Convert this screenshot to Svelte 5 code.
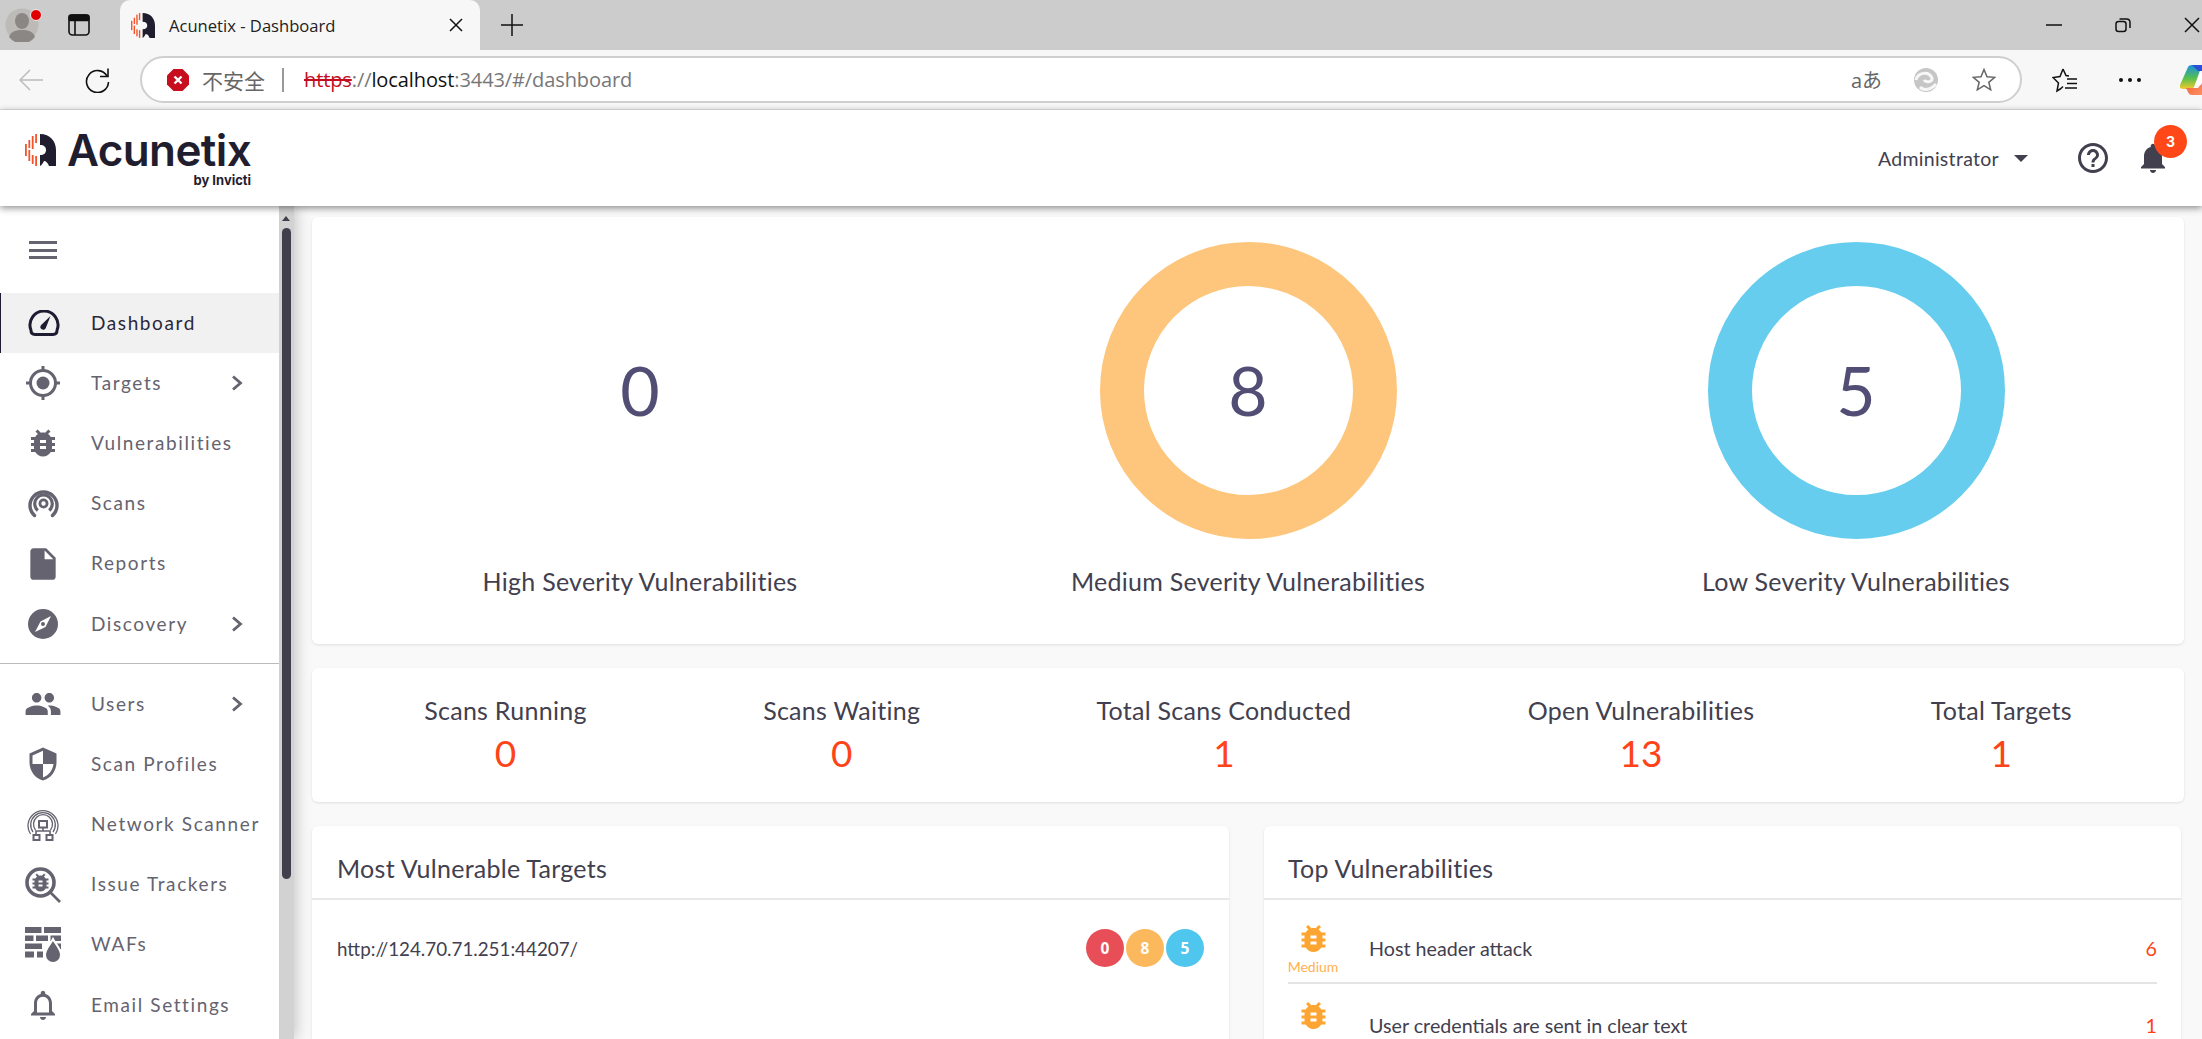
<script>
  const PATHS = {
    bug: 'M20 8h-2.81c-.45-.78-1.07-1.45-1.82-1.96L17 4.41 15.59 3l-2.17 2.17C12.96 5.06 12.49 5 12 5c-.49 0-.96.06-1.41.17L8.41 3 7 4.41l1.62 1.63C7.88 6.55 7.26 7.22 6.81 8H4v2h2.09c-.05.33-.09.66-.09 1v1H4v2h2v1c0 .34.04.67.09 1H4v2h2.81c1.04 1.79 2.97 3 5.19 3s4.15-1.21 5.19-3H20v-2h-2.09c.05-.33.09-.66.09-1v-1h2v-2h-2v-1c0-.34-.04-.67-.09-1H20V8zm-6 8h-4v-2h4v2zm0-4h-4v-2h4v2z',
    file: 'M6 2c-1.1 0-1.99.9-1.99 2L4 20c0 1.1.89 2 1.99 2H18c1.1 0 2-.9 2-2V8l-6-6H6zm7 7V3.5L18.5 9H13z',
    users: 'M16 11c1.66 0 2.99-1.34 2.99-3S17.66 5 16 5c-1.66 0-3 1.34-3 3s1.34 3 3 3zm-8 0c1.66 0 2.99-1.34 2.99-3S9.66 5 8 5C6.34 5 5 6.34 5 8s1.34 3 3 3zm0 2c-2.33 0-7 1.17-7 3.5V19h14v-2.5c0-2.33-4.67-3.5-7-3.5zm8 0c-.29 0-.62.02-.97.05 1.16.84 1.97 1.97 1.97 3.45V19h6v-2.5c0-2.33-4.67-3.5-7-3.5z',
    shield: 'M12 1L3 5v6c0 5.55 3.84 10.74 9 12 5.16-1.26 9-6.45 9-12V5l-9-4zm0 10.99h7c-.53 4.12-3.28 7.79-7 8.94V12H5V6.3l7-3.11v8.8z',
    bellO: 'M12 22c1.1 0 2-.9 2-2h-4c0 1.1.9 2 2 2zm6-6v-5c0-3.07-1.63-5.64-4.5-6.32V4c0-.83-.67-1.5-1.5-1.5s-1.5.67-1.5 1.5v.68C7.64 5.36 6 7.92 6 11v5l-2 2v1h16v-1l-2-2zm-2 1H8v-6c0-2.48 1.51-4.5 4-4.5s4 2.02 4 4.5v6z',
    bell: 'M12 22c1.1 0 2-.9 2-2h-4c0 1.1.89 2 2 2zm6-6v-5c0-3.07-1.64-5.64-4.5-6.32V4c0-.83-.67-1.5-1.5-1.5s-1.5.67-1.5 1.5v.68C7.63 5.36 6 7.92 6 11v5l-2 2v1h16v-1l-2-2z',
    help: 'M11 18h2v-2h-2v2zm1-16C6.48 2 2 6.48 2 12s4.48 10 10 10 10-4.48 10-10S17.52 2 12 2zm0 18c-4.41 0-8-3.59-8-8s3.59-8 8-8 8 3.59 8 8-3.59 8-8 8zm0-14c-2.21 0-4 1.79-4 4h2c0-1.1.9-2 2-2s2 .9 2 2c0 2-3 1.75-3 5h2c0-2.25 3-2.5 3-5 0-2.21-1.79-4-4-4z'
  };
  const primary = [
    { label: 'Dashboard', icon: 'gauge', active: true },
    { label: 'Targets', icon: 'target', more: true },
    { label: 'Vulnerabilities', icon: 'bug' },
    { label: 'Scans', icon: 'scans' },
    { label: 'Reports', icon: 'file' },
    { label: 'Discovery', icon: 'compass', more: true }
  ];
  const secondary = [
    { label: 'Users', icon: 'users', more: true },
    { label: 'Scan Profiles', icon: 'shield' },
    { label: 'Network Scanner', icon: 'network' },
    { label: 'Issue Trackers', icon: 'tracker' },
    { label: 'WAFs', icon: 'waf' },
    { label: 'Email Settings', icon: 'bellO' }
  ];
  const severities = [
    { cls: 'high', value: 0, label: 'High Severity Vulnerabilities' },
    { cls: 'medium', value: 8, label: 'Medium Severity Vulnerabilities' },
    { cls: 'low', value: 5, label: 'Low Severity Vulnerabilities' }
  ];
  const stats = [
    { label: 'Scans Running', value: 0 },
    { label: 'Scans Waiting', value: 0 },
    { label: 'Total Scans Conducted', value: 1 },
    { label: 'Open Vulnerabilities', value: 13 },
    { label: 'Total Targets', value: 1 }
  ];
  const tops = [
    { name: 'Host header attack', count: 6 },
    { name: 'User credentials are sent in clear text', count: 1 }
  ];
</script>

{#snippet logoMark(cls)}
  <svg class={cls} viewBox="0 0 31 32">
    <path fill="#1f1d2e" d="M15 0C25 0 31 7 31 16V32H24C23 29 21 27 19 27C18 29 16 32 15 32V21C19 21 21 19 21 16C21 13 19 11 15 11Z" />
    <g fill="#f2552c">
      <rect x="0" y="10" width="1.8" height="12" />
      <rect x="3.4" y="6" width="1.8" height="8" /><rect x="3.4" y="16" width="1.8" height="11" />
      <rect x="6.8" y="2" width="1.8" height="13" /><rect x="6.8" y="21" width="1.8" height="9" />
      <rect x="10.2" y="0" width="1.8" height="9" /><rect x="10.2" y="22" width="1.8" height="10" />
    </g>
  </svg>
{/snippet}

{#snippet navIcon(name)}
  {#if name === 'gauge'}
    <svg class="ic gauge" viewBox="0 0 32 26" fill="none" stroke="currentColor">
      <path stroke-width="3" d="M7 24.500H25Q29 24.500 29.080 20A14 14 0 1 0 2.920 20Q3 24.500 7 24.500Z" />
      <path stroke-width="0" fill="currentColor" d="M22.500 6L17.800 18A2.800 2.800 0 1 1 13.200 15Z" />
    </svg>
  {:else if name === 'target'}
    <svg class="ic target" viewBox="0 0 34 34" fill="none" stroke="currentColor">
      <circle cx="17" cy="17" r="12.500" stroke-width="3" />
      <circle cx="17" cy="17" r="6.500" fill="currentColor" stroke="none" />
      <path stroke-width="3" d="M17 0v4M17 30v4M0 17h4M30 17h4" />
    </svg>
  {:else if name === 'scans'}
    <svg class="ic scans" viewBox="0 0 31 29" fill="none" stroke="currentColor">
      <circle cx="15.500" cy="14.500" r="3.600" stroke-width="2.800" />
      <path stroke-width="3.200" d="M9.800 21.500A8.800 8.800 0 1 1 21.200 21.500" />
      <path stroke-width="3.400" stroke-linecap="round" d="M6.500 26.500A13.500 13.500 0 1 1 24.500 26.500" />
    </svg>
  {:else if name === 'compass'}
    <svg class="ic compass" viewBox="0 0 30 30">
      <circle cx="15" cy="15" r="15" fill="currentColor" />
      <path fill="#fff" d="M23 7L17.500 18 7 23 12.500 12.500z" />
      <circle cx="15" cy="15" r="2" fill="currentColor" />
    </svg>
  {:else if name === 'network'}
    <svg class="ic network" viewBox="0 0 32 33" fill="none" stroke="currentColor" stroke-width="1.300">
      <path d="M3.500 26A15 15 0 1 1 28.500 26" />
      <path d="M6 24A12.300 12.300 0 1 1 26 24" />
      <path d="M8.500 22A9.500 9.500 0 1 1 23.500 22" />
      <rect x="12" y="13" width="8" height="6.500" stroke-width="2" fill="#fff" />
      <path stroke-width="1.600" d="M16 19.500v3.500M9 27v-4h14v4" />
      <rect x="6.500" y="27" width="6" height="5" stroke-width="2" />
      <rect x="19.500" y="27" width="6" height="5" stroke-width="2" />
    </svg>
  {:else if name === 'tracker'}
    <svg class="ic tracker" viewBox="0 0 36 36" fill="none" stroke="currentColor">
      <circle cx="15.500" cy="15.500" r="13.500" stroke-width="3.600" />
      <path stroke-width="2.600" d="M25 25L35 35" />
      <svg x="3.500" y="3.500" width="24" height="24" viewBox="0 0 24 24"><path fill="currentColor" stroke="none" d={PATHS.bug} /></svg>
    </svg>
  {:else if name === 'waf'}
    <svg class="ic waf" viewBox="0 0 36 36">
      <g fill="currentColor">
        <rect x="0" y="0" width="16.500" height="6" /><rect x="19" y="0" width="17" height="6" />
        <rect x="0" y="8.500" width="8.500" height="5.500" /><rect x="11" y="8.500" width="12" height="5.500" /><rect x="25.500" y="8.500" width="10.500" height="5.500" />
        <rect x="0" y="16.500" width="17" height="5.500" /><rect x="30" y="16.500" width="6" height="5.500" />
        <rect x="0" y="24.500" width="9" height="6" /><rect x="12" y="24.500" width="6" height="6" />
        <path stroke="#fff" stroke-width="2" d="M28 12C31 18 36 22 36 28A8 8 0 0 1 20 28C20 22 25 18 28 12Z" />
      </g>
    </svg>
  {:else}
    <svg class="ic {name}" viewBox="0 0 24 24"><path fill="currentColor" d={PATHS[name]} /></svg>
  {/if}
{/snippet}

{#snippet navRow(item)}
  <div class="nav-row" class:active={item.active}>
    <span class="nav-icon">{@render navIcon(item.icon)}</span>
    <span class="nav-label">{item.label}</span>
    {#if item.more}
      <svg class="chev" viewBox="0 0 12 16" fill="none" stroke="currentColor" stroke-width="2.800"><path d="M2 1.500L9.500 8 2 14.500" /></svg>
    {/if}
  </div>
{/snippet}

<div class="page">
  <div class="tabstrip">
    <div class="profile">
      <svg viewBox="0 0 34 34">
        <circle cx="17" cy="17" r="16.500" fill="#bdbbb8" />
        <ellipse cx="17" cy="13" rx="7" ry="8" fill="#8a8784" />
        <path fill="#8a8784" d="M4 29C6 23 11 22 17 22S28 23 30 29A16.500 16.500 0 0 1 4 29Z" />
      </svg>
      <span class="dot"></span>
    </div>
    <svg class="tab-layout" viewBox="0 0 22 22" fill="none" stroke="#111" stroke-width="1.600">
      <rect x="1" y="1" width="20" height="20" rx="3.500" />
      <path d="M7 6.500V21M1 6.500H21" />
      <rect x="1" y="1" width="20" height="5" rx="2" fill="#111" />
    </svg>
    <div class="tab">
      {@render logoMark('favicon')}
      <span class="tab-title">Acunetix - Dashboard</span>
      <svg class="tab-close" viewBox="0 0 14 14" stroke="#111" stroke-width="1.500"><path d="M1 1L13 13M13 1L1 13" /></svg>
    </div>
    <svg class="plus" viewBox="0 0 22 22" stroke="#111" stroke-width="1.500"><path d="M11 0V22M0 11H22" /></svg>
    <div class="winctl">
      <svg class="wc" viewBox="0 0 16 16" stroke="#111" stroke-width="1.500"><path d="M0 8H16" /></svg>
      <svg class="wc" viewBox="0 0 16 16" fill="none" stroke="#111" stroke-width="1.500"><rect x="1" y="4.500" width="10" height="10" rx="2.500" /><path d="M4.500 2H11.500Q15 2 15 5.500V11" /></svg>
      <svg class="wc last" viewBox="0 0 16 16" stroke="#111" stroke-width="1.500"><path d="M1 1L15 15M15 1L1 15" /></svg>
    </div>
  </div>

  <div class="toolbar">
    <svg class="back" viewBox="0 0 24 22" fill="none" stroke="#bcbcbc" stroke-width="1.500"><path d="M24 11H1M11 1L1 11 11 21" /></svg>
    <svg class="reload" viewBox="0 0 25 26" fill="none" stroke="#111" stroke-width="1.600"><path d="M22 9A11 11 0 1 0 23.500 15" /><path d="M23 1.500V9.500H15" /></svg>
    <div class="address">
      <svg class="stop" viewBox="0 0 22 22"><path fill="#c70d1e" d="M6.500 0h9L22 6.500v9L15.500 22h-9L0 15.500v-9z" /><path stroke="#fff" stroke-width="2.400" d="M7.500 7.500L14.500 14.500M14.500 7.500L7.500 14.500" /></svg>
      <span class="insecure">不安全</span>
      <span class="sep"></span>
      <span class="url"><span class="scheme">https</span><span class="grey">://</span><span class="host">localhost</span><span class="grey">:3443/#/dashboard</span></span>
      <span class="read">aあ</span>
      <svg class="edge" viewBox="0 0 24 24" fill="none"><circle cx="12" cy="12" r="12" fill="#c6c6c6" /><path stroke="#f7f7f7" stroke-width="3" d="M2 12C4 4 15 3 18 10C19 14 12 15 10 12M6 19C9 23 17 22 22 16" /></svg>
      <svg class="star" viewBox="0 0 24 23" fill="none" stroke="#666" stroke-width="1.500"><path d="M12 1.500L15 8.800 22.800 9.300 16.800 14.300 18.700 21.800 12 17.700 5.300 21.800 7.200 14.300 1.200 9.300 9 8.800Z" /></svg>
    </div>
    <svg class="fav" viewBox="0 0 26 26" fill="none" stroke="#111" stroke-width="1.500"><path d="M11 2L14 8.500 17 9M9 21.500L5 24 6.500 16 1 10.500 8 9.500 11 2M11 19.500L9 21.500" /><path d="M15 12H25M15 16.500H25M13 21H25" /></svg>
    <div class="dots"><span></span><span></span><span></span></div>
    <svg class="copilot" viewBox="0 0 32 30">
      <defs>
        <linearGradient id="cpa" x1="0" y1="0" x2="0" y2="1"><stop offset="0" stop-color="#1b8fe0" /><stop offset=".55" stop-color="#57c04e" /><stop offset="1" stop-color="#f5c92a" /></linearGradient>
        <linearGradient id="cpb" x1="0" y1="0" x2="1" y2="1"><stop offset="0" stop-color="#f0552f" /><stop offset="1" stop-color="#ff9d6e" /></linearGradient>
      </defs>
      <path fill="url(#cpa)" d="M8 2Q9 0 12 0H22L14 22Q13 24 10 24H3Q-1 24 0 20Z" />
      <path fill="#2a4fd8" d="M12 0H28L26 6H18Z" />
      <path fill="url(#cpb)" d="M6 23H18L30 8 32 22Q30 30 24 30H12Q9 30 8 27Z" />
      <path fill="#c14ec0" d="M24 9H31L30 22 24 26Z" />
      <path fill="#fff" d="M20 8H25L21 20H16Z" />
    </svg>
  </div>

  <header class="apphead">
    <div class="brand">
      {@render logoMark('brandmark')}
      <div class="brandtext">
        <span class="brandname">Acunetix</span>
        <span class="brandby">by Invicti</span>
      </div>
    </div>
    <div class="userbox">
      <span class="admin">Administrator</span>
      <span class="caret"></span>
      <svg class="helpic" viewBox="2 2 20 20"><path fill="#42404e" d={PATHS.help} /></svg>
      <div class="bellbox">
        <svg class="bellic" viewBox="4 2 16 20"><path fill="#42404e" d={PATHS.bell} /></svg>
        <span class="count">3</span>
      </div>
    </div>
  </header>

  <div class="body">
    <aside class="sidebar">
      <div class="menu">
        <div class="burger"><span></span><span></span><span></span></div>
        {#each primary as item}{@render navRow(item)}{/each}
        <hr class="navsep" />
        {#each secondary as item}{@render navRow(item)}{/each}
      </div>
      <div class="scroll">
        <span class="scroll-up"></span>
        <span class="scroll-thumb"></span>
      </div>
    </aside>

    <main class="main">
      <section class="card donuts">
        {#each severities as s}
          <div class="sev {s.cls}">
            <div class="ring"><span>{s.value}</span></div>
            <div class="sev-label">{s.label}</div>
          </div>
        {/each}
      </section>

      <section class="card stats">
        {#each stats as st}
          <div class="stat">
            <div class="stat-label">{st.label}</div>
            <div class="stat-value">{st.value}</div>
          </div>
        {/each}
      </section>

      <div class="split">
        <section class="card panel">
          <h2 class="panel-title left">Most Vulnerable Targets</h2>
          <div class="target-row">
            <span class="target-url">http://124.70.71.251:44207/</span>
            <span class="pills">
              <span class="pill red">0</span>
              <span class="pill orange">8</span>
              <span class="pill blue">5</span>
            </span>
          </div>
        </section>
        <section class="card panel">
          <h2 class="panel-title">Top Vulnerabilities</h2>
          <div class="top-list">
            {#each tops as t}
              <div class="top-row">
                <div class="top-sev">
                  <svg class="top-bug" viewBox="4 3 16 18"><path fill="#fda532" d={PATHS.bug} /></svg>
                  <span>Medium</span>
                </div>
                <span class="top-name">{t.name}</span>
                <span class="top-count">{t.count}</span>
              </div>
            {/each}
          </div>
        </section>
      </div>
    </main>
  </div>
</div>

<style>
  :global(body) { margin: 0; background: #f9f9f9; overflow: hidden; }
  .page { width: 2202px; height: 1039px; overflow: hidden; display: flex; flex-direction: column; font-family: Lato, "Noto Sans", sans-serif; color: #42404e; }

  .tabstrip { height: 50px; flex: none; background: #cccccc; display: flex; align-items: center; font-family: "Open Sans", sans-serif; }
  .profile { width: 34px; height: 34px; margin-left: 5px; position: relative; }
  .profile svg { width: 34px; height: 34px; display: block; }
  .dot { position: absolute; top: 1px; right: -3px; width: 10px; height: 10px; border-radius: 50%; background: #e00000; border: 1px solid #eee; }
  .tab-layout { width: 22px; height: 22px; margin-left: 29px; }
  .tab { width: 360px; height: 50px; margin-left: 30px; background: #f7f7f7; border-radius: 10px 10px 0 0; display: flex; align-items: center; padding: 0 16px 0 11px; box-sizing: border-box; }
  .favicon { width: 24px; height: 25px; }
  .tab-title { font-size: 16.600px; color: #222; margin-left: 14px; flex: 1; }
  .tab-close { width: 14px; height: 14px; margin-right: 1px; }
  .plus { width: 22px; height: 22px; margin-left: 21px; }
  .winctl { margin-left: auto; display: flex; align-items: center; }
  .wc { width: 16px; height: 16px; margin-right: 53px; }
  .wc.last { margin-right: 2px; }

  .toolbar { height: 60px; flex: none; box-sizing: border-box; background: #f7f7f7; border-bottom: 1px solid #e4e4e4; display: flex; align-items: center; padding-left: 19px; overflow: hidden; }
  .toolbar > * { flex: none; }
  .back { width: 24px; height: 22px; }
  .reload { width: 25px; height: 26px; margin-left: 42px; }
  .address { width: 1882px; height: 47px; box-sizing: border-box; margin-left: 30px; background: #fff; border: 2px solid #cfcfcf; border-radius: 24px; display: flex; align-items: center; padding-left: 25px; font-family: "Open Sans", "Noto Sans CJK SC", sans-serif; }
  .stop { width: 22px; height: 22px; }
  .insecure { font-size: 21px; color: #666; margin-left: 13px; font-family: "Noto Sans CJK SC", sans-serif; }
  .sep { width: 2px; height: 24px; background: #999; margin-left: 17px; }
  .url { font-size: 20px; margin-left: 20px; flex: 1; letter-spacing: -.1px; }
  .scheme { color: #c40e1f; text-decoration: line-through; }
  .grey { color: #777; }
  .host { color: #111; }
  .read { font-size: 20px; color: #666; margin-right: 32px; }
  .edge { width: 24px; height: 24px; margin-right: 34px; }
  .star { width: 24px; height: 23px; margin-right: 24px; }
  .fav { width: 26px; height: 26px; margin-left: 30px; }
  .dots { display: flex; gap: 5px; margin-left: 41px; }
  .dots span { width: 4px; height: 4px; border-radius: 50%; background: #111; }
  .copilot { width: 32px; height: 30px; margin-left: 39px; }

  .apphead { height: 96px; flex: none; background: #fff; display: flex; align-items: center; justify-content: space-between; box-shadow: 0 2px 7px rgba(0,0,0,.45); position: relative; z-index: 3; }
  .brand { display: flex; margin-left: 25px; align-items: flex-start; align-self: flex-start; padding-top: 24px; }
  .brandmark { width: 31px; height: 32px; }
  .brandtext { display: flex; flex-direction: column; align-items: flex-end; margin-left: 11px; }
  .brandname { font-family: Inter, sans-serif; font-weight: 600; font-size: 44px; line-height: 33px; color: #1f1d2e; letter-spacing: -.6px; }
  .brandby { font-family: Inter, sans-serif; font-weight: 700; font-size: 13px; line-height: 14px; margin-top: 6px; color: #1f1d2e; }
  .userbox { display: flex; align-items: center; padding-right: 37px; }
  .admin { font-size: 19.500px; letter-spacing: .3px; color: #42404e; }
  .caret { width: 0; height: 0; border: 7px solid transparent; border-top: 7px solid #42404e; border-bottom: 0; margin-left: 15px; }
  .helpic { width: 30px; height: 30px; margin-left: 50px; }
  .bellbox { position: relative; width: 24px; height: 30px; margin-left: 33px; margin-top: 0; }
  .bellic { width: 24px; height: 30px; display: block; }
  .count { position: absolute; left: 13px; top: -18px; width: 33px; height: 33px; border-radius: 50%; background: #ff4718; color: #fff; font: 700 14px/33px Inter, sans-serif; text-align: center; }

  .body { flex: 1; display: flex; min-height: 0; }
  .sidebar { width: 294px; flex: none; display: flex; background: #fff; box-shadow: 2px 0 14px rgba(0,0,0,.22); position: relative; z-index: 2; }
  .menu { width: 279px; flex: none; overflow: hidden; color: #65636f; }
  .burger { height: 87px; box-sizing: border-box; padding: 35px 0 0 29px; display: flex; flex-direction: column; gap: 4.500px; }
  .burger span { width: 28px; height: 3px; background: #65636f; }
  .nav-row { height: 60.200px; display: flex; align-items: center; box-sizing: border-box; padding-right: 36px; }
  .nav-row.active { background: #f1f1f1; border-left: 1px solid #1e1c30; color: #2a2838; }
  .nav-row.active .nav-icon { width: 85px; color: #1e1c30; }
  .nav-icon { width: 86px; display: flex; justify-content: center; align-items: center; flex: none; }
  .nav-label { flex: 1; font-size: 19px; letter-spacing: 1.600px; margin-left: 5px; white-space: nowrap; position: relative; top: -1px; }
  .chev { width: 12px; height: 16px; }
  .navsep { border: 0; border-top: 1px solid #bbb; margin: 9px 0 10px; }
  .ic { display: block; }
  .gauge { width: 32px; height: 26px; }
  .target { width: 34px; height: 34px; }
  .bug { width: 38px; height: 36px; }
  .scans { width: 31px; height: 29px; }
  .file { width: 38px; height: 38px; }
  .compass { width: 30px; height: 30px; }
  .users { width: 38px; height: 38px; }
  .shield { width: 36px; height: 36px; }
  .network { width: 32px; height: 33px; }
  .tracker { width: 36px; height: 36px; }
  .waf { width: 36px; height: 36px; }
  .bellO { width: 36px; height: 36px; }
  .scroll { width: 15px; background: #d2d2d2; padding-left: 3px; box-sizing: border-box; display: flex; flex-direction: column; align-items: flex-start; }
  .scroll-up { width: 0; height: 0; border: 4.500px solid transparent; border-bottom: 5px solid #413f4b; border-top: 0; margin-top: 10px; }
  .scroll-thumb { width: 9px; height: 651px; border-radius: 5px; background: #413f4b; margin-top: 7px; }

  .main { flex: 1; min-width: 0; padding: 11px 18px 0; display: flex; flex-direction: column; gap: 24px; }
  .card { background: #fff; border-radius: 6px; box-shadow: 0 1px 3px rgba(0,0,0,.11); flex: none; }

  .donuts { height: 427px; box-sizing: border-box; display: flex; padding: 25px 24px 0; }
  .sev { flex: 1; display: flex; flex-direction: column; align-items: center; }
  .ring { width: 297px; height: 297px; box-sizing: border-box; border-radius: 50%; border: 44.500px solid transparent; display: flex; align-items: center; justify-content: center; font-size: 68px; font-weight: 400; color: #514d75; }
  .ring span { position: relative; top: -1px; }
  .medium .ring { border-color: #fdc67c; }
  .low .ring { border-color: #67cdee; }
  .sev-label { margin-top: 24px; font-size: 25px; letter-spacing: .27px; line-height: 36px; }

  .stats { height: 134px; box-sizing: border-box; display: flex; justify-content: space-around; padding: 24px 24px 0; }
  .stat { text-align: center; }
  .stat-label { font-size: 25px; letter-spacing: .27px; line-height: 36px; }
  .stat-value { font-size: 37px; font-weight: 400; line-height: 48px; margin-top: 1px; color: #ff4318; }

  .split { display: grid; grid-template-columns: 917px 917px; gap: 35px; }
  .panel { height: 260px; }
  .panel-title { margin: 0; height: 74px; box-sizing: border-box; padding: 24px 24px 0; font-size: 25px; letter-spacing: .27px; line-height: 36px; font-weight: 400; border-bottom: 2px solid #e8e8e8; }
  .panel-title.left { padding-left: 25px; }
  .target-row { display: flex; align-items: center; justify-content: space-between; padding: 29px 25px 0; }
  .target-url { font-size: 18.800px; }
  .pills { display: flex; gap: 2px; }
  .pill { width: 38px; height: 38px; border-radius: 50%; color: #fff; font: 700 15.500px/38px "Noto Sans", sans-serif; text-align: center; }
  .red { background: #e84e58; }
  .orange { background: #fbb85c; }
  .blue { background: #4fc6ed; }
  .top-list { padding: 7px 24px 0; }
  .top-row { display: flex; align-items: center; border-bottom: 2px solid #e4e4e4; padding-top: 18px; }
  .top-sev { width: 50px; flex: none; display: flex; flex-direction: column; align-items: center; }
  .top-bug { width: 25px; height: 27px; }
  .top-sev span { font-size: 14px; line-height: 24px; color: #ffb050; margin-top: 3px; margin-bottom: 3px; }
  .top-name { flex: 1; margin-left: 31px; font-size: 19.700px; margin-bottom: 10px; }
  .top-count { font-size: 19.700px; color: #ff4318; margin-bottom: 10px; }
</style>
